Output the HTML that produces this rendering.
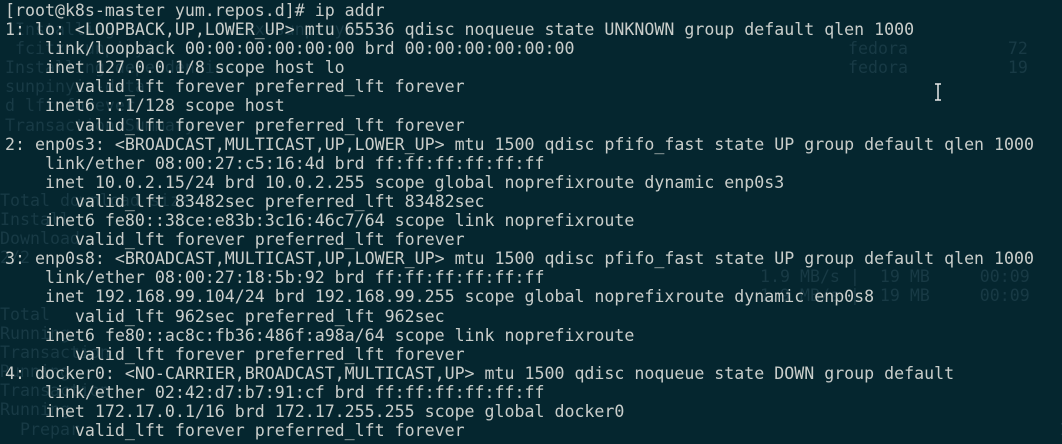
<!DOCTYPE html>
<html><head><meta charset="utf-8"><style>
html,body{margin:0;padding:0;width:1062px;height:444px;overflow:hidden;}
body{background:#05262f;position:relative;}
pre{margin:0;position:absolute;left:5px;top:1px;font-family:"DejaVu Sans Mono","Liberation Mono",monospace;font-size:16.6px;line-height:19.1px;color:#c9cdca;white-space:pre;}
.g{position:absolute;font-family:"DejaVu Sans Mono",monospace;font-size:16.6px;line-height:19.1px;color:#183a45;white-space:pre;}
</style></head><body>
<div class="g" style="left:5px;top:1px">                                                                                                      
 Installing          fcitx-sunpinyin                    
 fcitx-sunpinyin  
Installing dependencies:
sunpinyin-data   
d lft forever  
Transaction Summary</div>
<div class="g" style="left:848px;top:39px">fedora          72
fedora          19</div>
<div class="g" style="left:0px;top:191px">Total download size
Install
Download
2/2
</div>
<div class="g" style="left:760px;top:267px">1.9 MB/s |  19 MB     00:09
1.9 MB/s |  19 MB     00:09</div>
<div class="g" style="left:0px;top:305px">Total
Running
Transaction
Running
Transaction
Running
  Prepar                                                                                                  1/</div>
<svg viewBox="0 0 6 18" style="position:absolute;left:935px;top:83px" width="6" height="18"><path d="M0 1H6M3 1V17M0 17H6" stroke="#e8e8e8" stroke-width="1.5" fill="none"/></svg>
<pre>[root@k8s-master yum.repos.d]# ip addr
1: lo: &lt;LOOPBACK,UP,LOWER_UP&gt; mtu 65536 qdisc noqueue state UNKNOWN group default qlen 1000
    link/loopback 00:00:00:00:00:00 brd 00:00:00:00:00:00
    inet 127.0.0.1/8 scope host lo
       valid_lft forever preferred_lft forever
    inet6 ::1/128 scope host
       valid_lft forever preferred_lft forever
2: enp0s3: &lt;BROADCAST,MULTICAST,UP,LOWER_UP&gt; mtu 1500 qdisc pfifo_fast state UP group default qlen 1000
    link/ether 08:00:27:c5:16:4d brd ff:ff:ff:ff:ff:ff
    inet 10.0.2.15/24 brd 10.0.2.255 scope global noprefixroute dynamic enp0s3
       valid_lft 83482sec preferred_lft 83482sec
    inet6 fe80::38ce:e83b:3c16:46c7/64 scope link noprefixroute
       valid_lft forever preferred_lft forever
3: enp0s8: &lt;BROADCAST,MULTICAST,UP,LOWER_UP&gt; mtu 1500 qdisc pfifo_fast state UP group default qlen 1000
    link/ether 08:00:27:18:5b:92 brd ff:ff:ff:ff:ff:ff
    inet 192.168.99.104/24 brd 192.168.99.255 scope global noprefixroute dynamic enp0s8
       valid_lft 962sec preferred_lft 962sec
    inet6 fe80::ac8c:fb36:486f:a98a/64 scope link noprefixroute
       valid_lft forever preferred_lft forever
4: docker0: &lt;NO-CARRIER,BROADCAST,MULTICAST,UP&gt; mtu 1500 qdisc noqueue state DOWN group default
    link/ether 02:42:d7:b7:91:cf brd ff:ff:ff:ff:ff:ff
    inet 172.17.0.1/16 brd 172.17.255.255 scope global docker0
       valid_lft forever preferred_lft forever</pre>
</body></html>
